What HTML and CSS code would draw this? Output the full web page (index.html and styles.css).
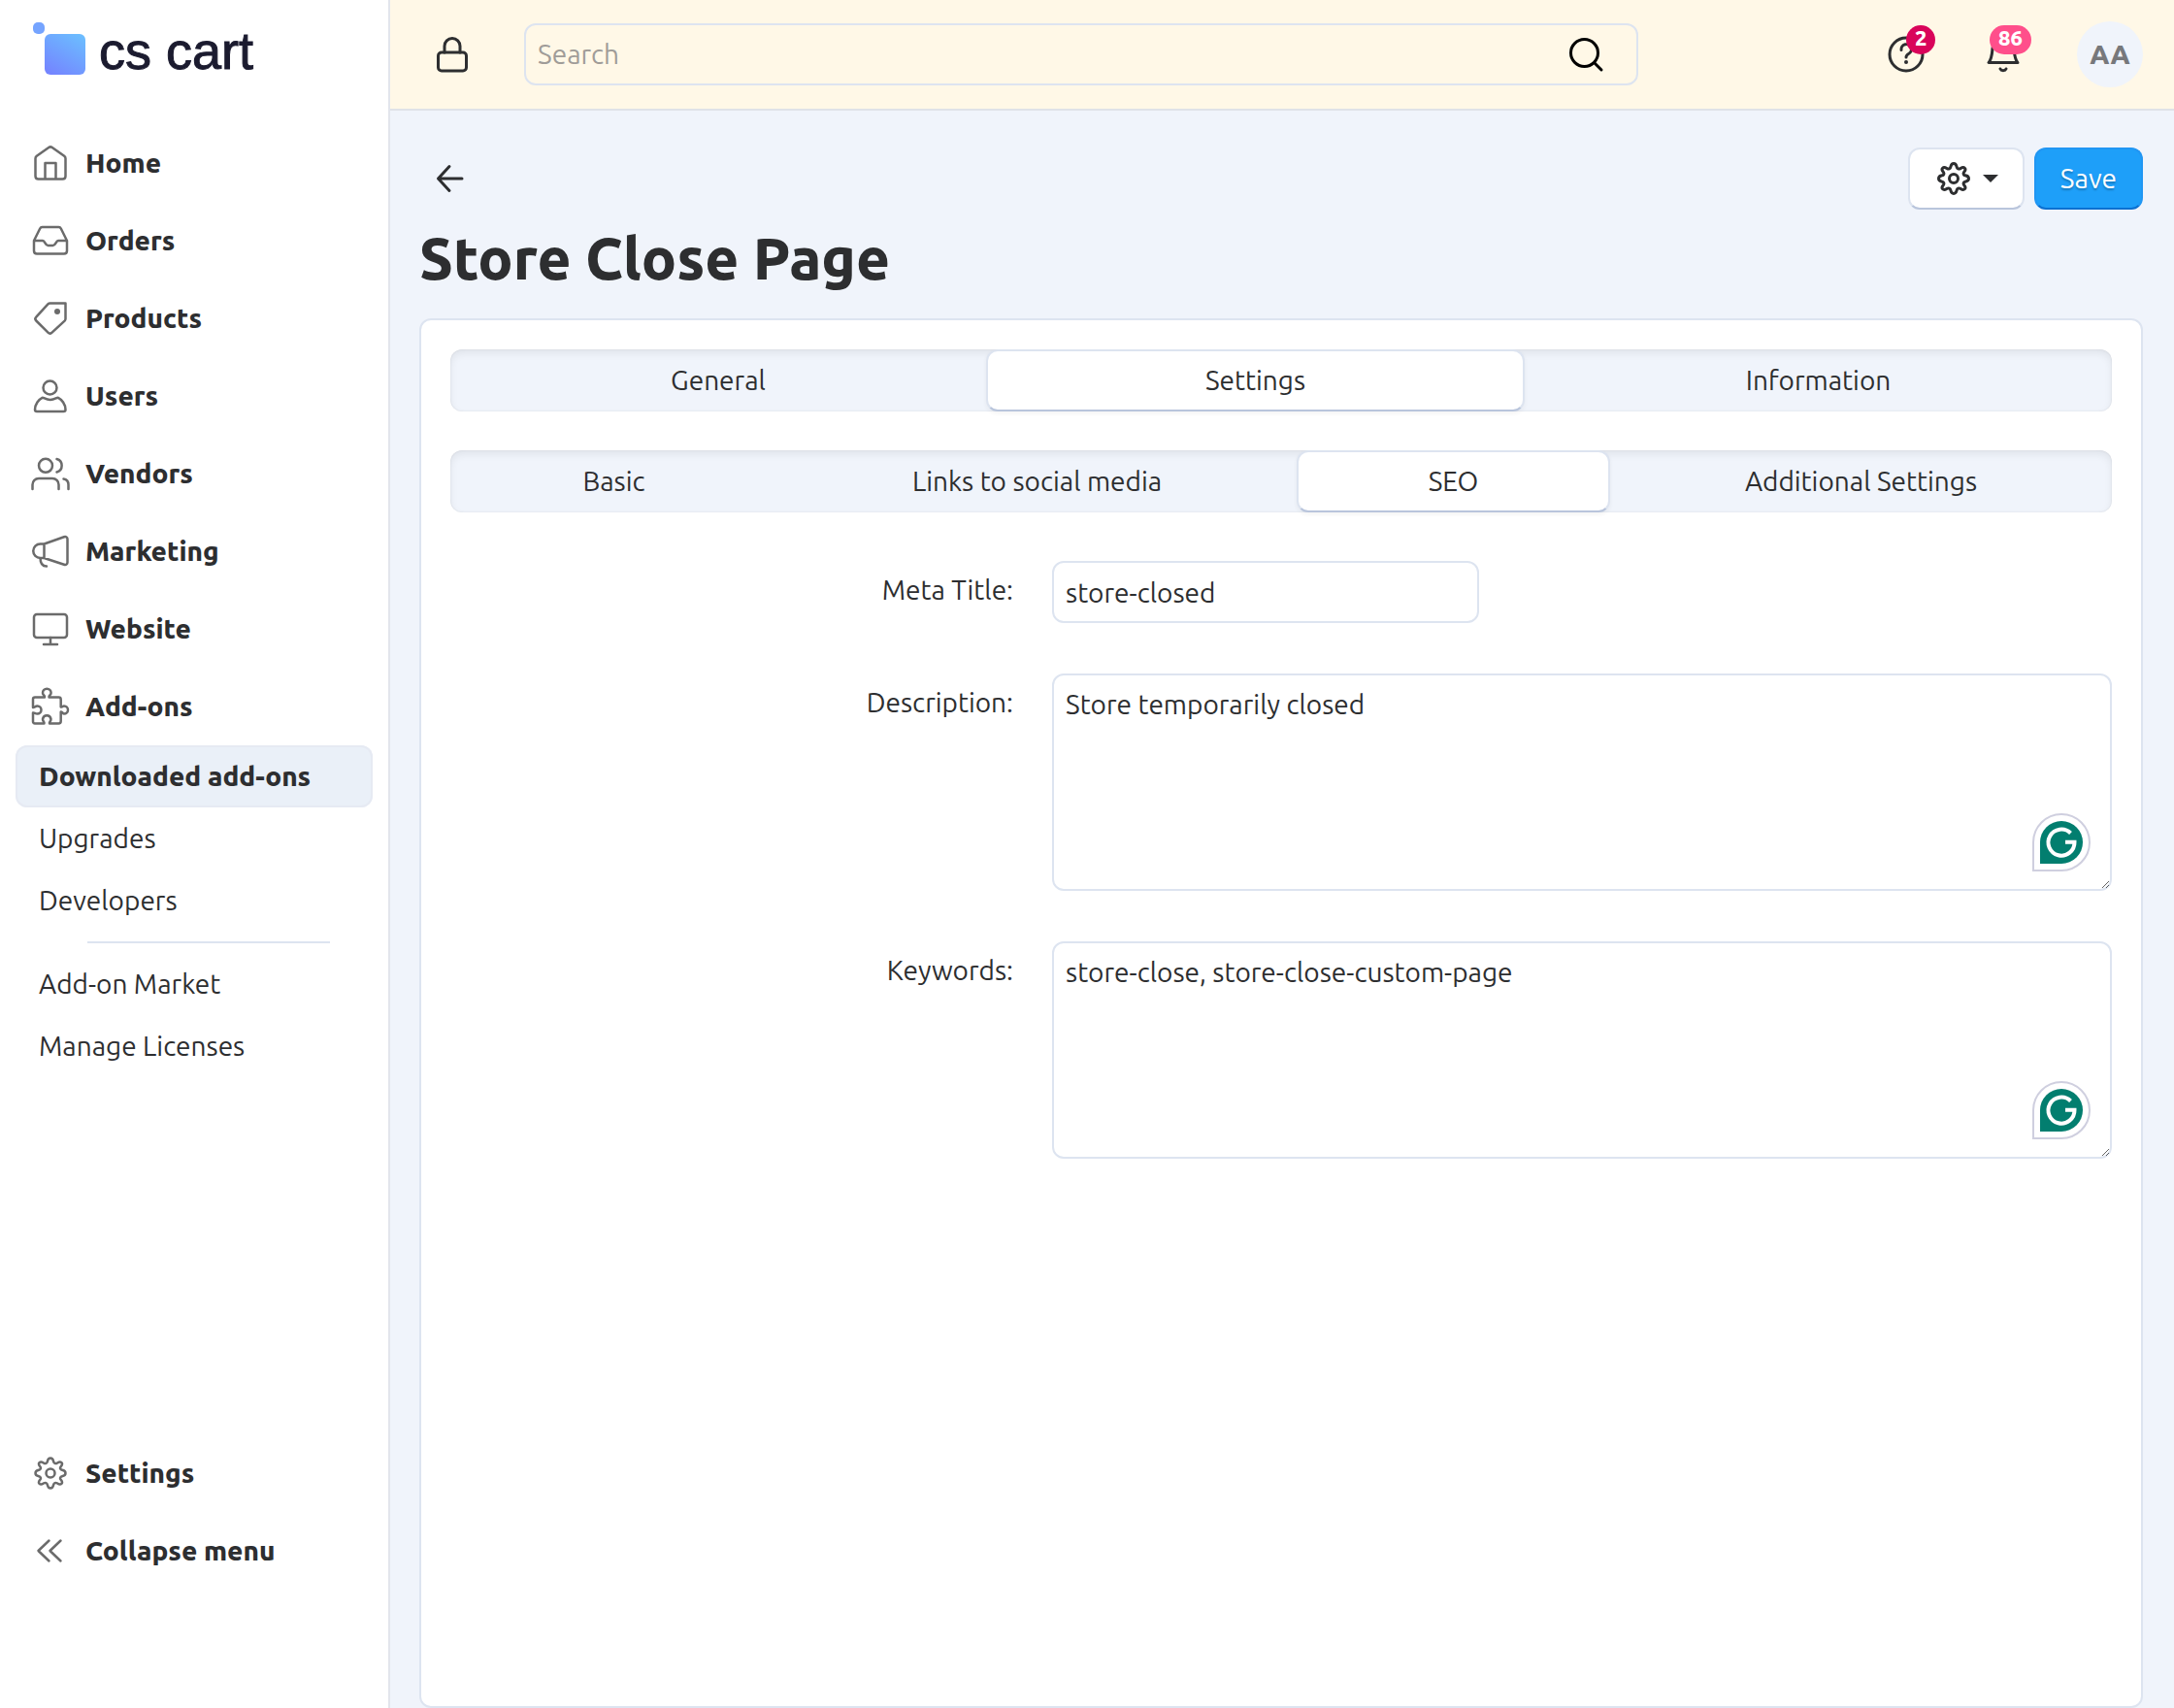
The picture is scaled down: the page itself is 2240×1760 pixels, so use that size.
FILE: index.html
```html
<!DOCTYPE html>
<html lang="en">
<head>
  <meta charset="UTF-8">
  <meta name="viewport" content="width=device-width, initial-scale=1.0">
  <title>Store Close Page</title>
  <link rel="stylesheet" href="styles.css">
</head>
<body>
  <svg class="sprite" aria-hidden="true">
    <symbol id="gear" viewBox="0 0 40 40">
      <path d="M20 4.5C22.6 4.5 22.8 6.600 23.200 8.200C23.600 9.900 25.300 10.600 26.800 9.700C28.200 8.800 29.800 7.600 31.400 9.200C33 10.800 31.600 12.200 30.500 13.500C29.500 14.900 30.300 16.500 31.900 16.800C33.600 17.100 35.500 17.600 35.500 20C35.500 22.400 33.600 22.900 31.900 23.200C30.300 23.500 29.500 25.100 30.500 26.500C31.600 27.800 33 29.200 31.400 30.800C29.800 32.400 28.200 31.200 26.800 30.300C25.300 29.400 23.600 30.100 23.200 31.800C22.800 33.400 22.600 35.500 20 35.500C17.400 35.500 17.200 33.400 16.800 31.800C16.400 30.100 14.700 29.400 13.200 30.300C11.800 31.200 10.200 32.400 8.600 30.800C7 29.200 8.400 27.800 9.500 26.500C10.500 25.100 9.700 23.500 8.100 23.200C6.400 22.900 4.500 22.400 4.500 20C4.500 17.600 6.400 17.100 8.100 16.800C9.700 16.500 10.500 14.900 9.500 13.500C8.400 12.200 7 10.800 8.600 9.200C10.200 7.600 11.800 8.800 13.200 9.700C14.700 10.600 16.400 9.900 16.800 8.200C17.200 6.600 17.400 4.500 20 4.500Z"/>
      <circle cx="20" cy="20" r="4.500"/>
    </symbol>
    <symbol id="grammar" viewBox="0 0 60 60">
      <path d="M30 1A29 29 0 0 1 30 59H1V30A29 29 0 0 1 30 1Z" fill="#fff" stroke="#cfcfdf" stroke-width="2"/>
      <path d="M30 8A22 22 0 0 1 30 52H8V30A22 22 0 0 1 30 8Z" fill="#027e6f"/>
      <path d="M39.500 20.500A13.500 13.500 0 1 0 43.500 29.800H34" fill="none" stroke="#fff" stroke-width="4"/>
    </symbol>
  </svg>

  <div class="layout">
    <aside class="sidebar">
      <a class="logo" href="#">
        <svg width="60" height="60" viewBox="0 0 60 60" aria-hidden="true">
          <defs>
            <linearGradient id="logo-fill" x1="0.2" y1="1" x2="0.8" y2="0">
              <stop offset="0" stop-color="#7485ff"/>
              <stop offset="1" stop-color="#6cbcff"/>
            </linearGradient>
          </defs>
          <rect x="2" y="1" width="12" height="12" rx="5" fill="#75a4ff"/>
          <rect x="14" y="13" width="42" height="42" rx="6" fill="url(#logo-fill)"/>
        </svg>
        <span>cs cart</span>
      </a>

      <nav class="menu">
        <a href="#"><svg class="icon" viewBox="0 0 40 40"><path d="M4.500 15.200C4.500 14.200 5 13.300 5.800 12.700L18.200 4C19.300 3.200 20.700 3.200 21.800 4L34.200 12.700C35 13.300 35.500 14.200 35.500 15.200V33.500C35.500 35.200 34.200 36.500 32.500 36.500H7.500C5.800 36.500 4.500 35.200 4.500 33.500ZM14.500 36V20H25.500V36"/></svg>Home</a>
        <a href="#"><svg class="icon" viewBox="0 0 40 40"><path d="M3 20L9.200 7.500C9.700 6.500 10.500 6 11.500 6H28.500C29.500 6 30.300 6.500 30.800 7.500L37 20V30.500C37 32.200 35.700 33.500 34 33.500H6C4.300 33.500 3 32.200 3 30.500ZM3 20H12C14.500 20 14.500 25 17.500 25H22.500C25.500 25 25.500 20 28 20H37"/></svg>Orders</a>
        <a href="#"><svg class="icon" viewBox="0 0 40 40"><path d="M19.500 4.500H35.500V20.500C35.500 21.300 35.200 22 34.600 22.600L21.300 34.800C20.200 35.800 18.600 35.800 17.500 34.700L5.300 22.500C4.200 21.400 4.200 19.700 5.300 18.600L17.400 5.400C18 4.800 18.700 4.500 19.500 4.500Z"/><circle class="solid" cx="27" cy="13" r="3"/></svg>Products</a>
        <a href="#"><svg class="icon" viewBox="0 0 40 40"><circle cx="19.500" cy="11.500" r="7"/><path d="M11.500 21.800C8 23.500 4 28.500 4 34C4 35.200 4.800 36 6 36H33.500C34.700 36 35.500 35.200 35.500 34C35.500 28.500 31.500 23.500 28 21.800C26.500 21.200 24.500 24 19.800 24C15 24 13 21.200 11.500 21.800Z"/></svg>Users</a>
        <a href="#"><svg class="icon" viewBox="0 0 40 40"><circle cx="15" cy="11.800" r="7"/><path d="M26.500 5A7 7 0 0 1 26.500 18.500M1.500 36V31.500C1.500 28 4.200 25 8 25H22C25.800 25 28.500 28 28.500 31.500V36M33.500 25.500C36.500 26 38.500 28.500 38.500 31.500V36"/></svg>Vendors</a>
        <a href="#"><svg class="icon" viewBox="0 0 40 40"><path d="M13.500 12.500L34 5.300C36 4.600 37.500 5.700 37.500 7.500V31.500C37.500 33.300 36 34.400 34 33.700L13.500 27H9.500A7.200 7.200 0 0 1 9.500 12.500ZM13.500 12.500V27M9.500 27C9.500 32 11.500 35.500 16 35.500"/></svg>Marketing</a>
        <a href="#"><svg class="icon" viewBox="0 0 40 40"><rect x="3" y="5" width="34" height="24" rx="3"/><path d="M20 29V36M13 36H27"/></svg>Website</a>
        <a href="#"><svg class="icon" viewBox="0 0 40 40"><path d="M4 10.500H14C14.500 8.500 12 8.500 12 6A4.300 4.300 0 0 1 20.600 6C20.600 8.500 18 8.500 18.500 10.500H28.500C30.200 10.500 30.700 11.500 30.700 12.700V20.500C32.500 21 32.500 19.500 34 19.500A4 4 0 0 1 34 27.500C32.500 27.500 32.500 25 30.700 25.500V35C30.700 36.500 30 37.500 28.500 37.500H19C18.500 35.500 20.500 35.500 20.500 33A4.300 4.300 0 0 0 12 33C12 35.500 14 35.500 13.500 37.500H4C2.700 37.500 2 36.700 2 35.500V26.500C3.500 26 4 27.500 6.500 27.500A4 4 0 0 0 6.500 19.500C4 19.500 3.500 21.500 2 21V12.500C2 11.200 2.700 10.500 4 10.500Z"/></svg>Add-ons</a>
      </nav>

      <nav class="submenu">
        <a class="active" href="#">Downloaded add-ons</a>
        <a href="#">Upgrades</a>
        <a href="#">Developers</a>
        <hr>
        <a href="#">Add-on Market</a>
        <a href="#">Manage Licenses</a>
      </nav>

      <nav class="menu menu-bottom">
        <a href="#"><svg class="icon"><use href="#gear"/></svg>Settings</a>
        <a href="#"><svg class="icon" viewBox="0 0 40 40"><path d="M18.500 9.500L7.500 20L18.500 30.500M30.500 9.500L19.500 20L30.500 30.500"/></svg>Collapse menu</a>
      </nav>
    </aside>

    <div class="page">
      <header class="topbar">
        <button class="icon-btn" type="button" aria-label="Store closed"><svg class="icon dark" viewBox="0 0 40 40"><rect x="5.500" y="18" width="29" height="19" rx="3.500"/><path d="M12 18V11.500A8 8 0 0 1 28 11.500V18"/></svg></button>
        <form class="search">
          <input type="search" placeholder="Search" aria-label="Search">
          <button class="icon-btn" type="button" aria-label="Find"><svg class="icon black" viewBox="0 0 40 40"><circle cx="18.500" cy="18.500" r="14"/><path d="M29 29L36 36"/></svg></button>
        </form>
        <div class="tools">
          <button class="icon-btn" type="button" aria-label="Help">
            <svg class="icon dark" viewBox="0 0 40 40"><circle cx="20" cy="20" r="17"/><path d="M15 15.500A5.200 5.200 0 1 1 22.500 19.500C20.800 20.500 20 21.300 20 23"/><circle class="solid" cx="20" cy="28" r="2"/></svg>
            <span class="badge badge-help">2</span>
          </button>
          <button class="icon-btn" type="button" aria-label="Notifications">
            <svg class="icon dark" viewBox="0 0 40 40"><path d="M5 28.500H35C32 25.500 31.500 20 31 14.500A11 11 0 0 0 9 14.500C8.500 20 8 25.500 5 28.500ZM17 35C18 37.300 22 37.300 23 35"/></svg>
            <span class="badge badge-bell">86</span>
          </button>
          <button class="avatar" type="button">AA</button>
        </div>
      </header>

      <main class="content">
        <div class="actions">
          <a class="back" href="#" aria-label="Back"><svg class="icon dark" viewBox="0 0 40 40"><path d="M32 20H8M19 7.500L7.500 20L19 32.500"/></svg></a>
          <button class="btn" type="button" aria-label="Tools"><svg class="icon dark"><use href="#gear"/></svg><span class="caret"></span></button>
          <button class="btn btn-primary" type="submit" form="addon-form">Save</button>
        </div>
        <h1>Store Close Page</h1>

        <section class="card">
          <div class="tabs tabs-main">
            <button type="button">General</button>
            <button class="active" type="button">Settings</button>
            <button type="button">Information</button>
          </div>
          <div class="tabs tabs-sub">
            <button type="button">Basic</button>
            <button type="button">Links to social media</button>
            <button class="active" type="button">SEO</button>
            <button type="button">Additional Settings</button>
          </div>

          <form class="fields" id="addon-form">
            <label for="meta-title">Meta Title:</label>
            <div class="control"><input id="meta-title" type="text" value="store-closed"></div>
            <label for="description">Description:</label>
            <div class="control">
              <textarea id="description">Store temporarily closed</textarea>
              <svg class="grammar"><use href="#grammar"/></svg>
            </div>
            <label for="keywords">Keywords:</label>
            <div class="control">
              <textarea id="keywords">store-close, store-close-custom-page</textarea>
              <svg class="grammar"><use href="#grammar"/></svg>
            </div>
          </form>
        </section>
      </main>
    </div>
  </div>
</body>
</html>
```

FILE: styles.css
```css
* {
  box-sizing: border-box;
}

body {
  margin: 0;
  font-family: Ubuntu, "Noto Sans", sans-serif;
  font-size: 28px;
  font-weight: 450;
  line-height: 40px;
  color: #2d2e30;
  background-color: #f0f4fb;
}

button,
input,
textarea {
  font: inherit;
  color: inherit;
}

button {
  cursor: pointer;
}

a {
  color: inherit;
  text-decoration: none;
}

.sprite {
  display: none;
}

.layout {
  display: flex;
  min-height: 100vh;
}

.icon {
  width: 40px;
  height: 40px;
  flex-shrink: 0;
  fill: none;
  stroke: #6b6b6b;
  stroke-width: 2.5;
  stroke-linecap: round;
  stroke-linejoin: round;
}

.icon.dark {
  stroke: #2d2e30;
  stroke-width: 3;
}

.icon.black {
  stroke: #000000;
  stroke-width: 3;
}

.icon .solid {
  fill: #6b6b6b;
  stroke: none;
}

.icon.dark .solid {
  fill: #2d2e30;
}

/* Sidebar */
.sidebar {
  display: flex;
  flex-direction: column;
  width: 402px;
  flex-shrink: 0;
  background-color: #ffffff;
  border-right: 2px solid #e2e5ec;
}

.logo {
  display: flex;
  gap: 10px;
  padding: 22px 32px 0;
  margin-bottom: 46px;
  font-family: "Liberation Sans", Arial, sans-serif;
  font-size: 54px;
  font-weight: normal;
  line-height: 60px;
  color: #1b1b2f;
  -webkit-text-stroke: 1px #1b1b2f;
}

.menu a {
  display: flex;
  align-items: center;
  gap: 16px;
  height: 80px;
  padding: 0 32px;
  font-weight: 800;
}

.submenu {
  padding: 0 16px;
}

.submenu a {
  display: block;
  padding: 12px 24px;
}

.submenu a.active {
  font-weight: 800;
  background-color: #eaf0f8;
  box-shadow: inset 0 0 0 2px #e6eaf3;
  border-radius: 12px;
}

.submenu hr {
  margin: 10px 44px 10px 74px;
  border: 0;
  border-top: 2px solid #dde4f0;
}

.menu-bottom {
  margin-top: auto;
  padding-bottom: 122px;
}

/* Top bar */
.page {
  display: flex;
  flex-direction: column;
  flex: 1;
  min-width: 0;
}

.topbar {
  display: flex;
  align-items: center;
  height: 114px;
  padding: 0 32px 0 44px;
  background-color: #fff8e7;
  border-bottom: 2px solid #dfe2e8;
}

.icon-btn {
  position: relative;
  display: flex;
  padding: 0;
  border: 0;
  background: none;
}

.search {
  display: flex;
  align-items: center;
  flex: 0 1 1148px;
  height: 64px;
  margin-left: 54px;
  padding-right: 32px;
  border: 2px solid #dde4f0;
  border-radius: 12px;
}

.search input {
  flex: 1;
  min-width: 0;
  padding: 0 12px;
  border: 0;
  outline: none;
  background: none;
}

.search input::placeholder {
  color: #9f9c98;
}

.tools {
  display: flex;
  align-items: center;
  margin-left: auto;
  gap: 60px;
}

.badge {
  position: absolute;
  top: -10px;
  min-width: 30px;
  height: 30px;
  padding: 0 9px;
  border-radius: 15px;
  font-size: 22px;
  font-weight: 800;
  line-height: 26px;
  color: #ffffff;
}

.badge-help {
  left: 20px;
  background-color: #d9045a;
}

.badge-bell {
  left: 6px;
  background-color: #ff4f8b;
}

.avatar {
  width: 68px;
  height: 68px;
  margin-left: -4px;
  padding: 0;
  border: 0;
  border-radius: 50%;
  font-weight: 800;
  color: #77787b;
  background-color: #f0f4fb;
}

/* Content */
.content {
  display: flex;
  flex-direction: column;
  flex: 1;
  padding: 38px 32px 0 30px;
}

.actions {
  display: flex;
  align-items: center;
  gap: 10px;
}

.back {
  display: flex;
  margin-right: auto;
  padding: 0 12px;
}

.btn {
  display: flex;
  align-items: center;
  gap: 10px;
  height: 64px;
  padding: 0 25px;
  border: 2px solid #dde4f0;
  border-bottom-color: #b9c5dc;
  border-radius: 12px;
  background-color: #ffffff;
}

.btn-primary {
  border-color: #2196f3;
  border-bottom-color: #0b70d1;
  color: #ffffff;
  background-color: #1e9ff9;
  text-shadow: 0 2px 2px rgba(0, 0, 0, 0.25);
}

.caret {
  border: 8px solid transparent;
  border-top-color: #2d2e30;
  border-bottom: 0;
}

h1 {
  margin: 10px 0 22px;
  font-size: 60px;
  font-weight: 800;
  line-height: 80px;
}

.card {
  flex: 1;
  padding: 30px;
  border: 2px solid #dde4f0;
  border-radius: 12px;
  background-color: #ffffff;
}

.tabs {
  display: grid;
  margin-bottom: 40px;
  border-radius: 12px;
  background-color: #f0f4fb;
  box-shadow: inset 0 4px 8px rgba(0, 0, 0, 0.07), inset 0 0 2px rgba(0, 0, 0, 0.1);
}

.tabs-main {
  grid-template-columns: 552fr 555fr 605fr;
}

.tabs-sub {
  grid-template-columns: 337fr 535fr 323fr 517fr;
}

.tabs button {
  height: 64px;
  padding: 0;
  border: 2px solid transparent;
  border-radius: 12px;
  background: none;
}

.tabs button.active {
  border-color: #dde4f0;
  border-bottom-color: #b9c5dc;
  background-color: #ffffff;
  box-shadow: 0 2px 4px rgba(45, 46, 48, 0.06);
}

.fields {
  display: grid;
  grid-template-columns: 580px 1fr;
  column-gap: 40px;
  row-gap: 52px;
  padding-top: 10px;
}

.fields label {
  padding-top: 10px;
  text-align: right;
}

.control {
  position: relative;
}

.control input,
.control textarea {
  display: block;
  padding: 10px 12px;
  border: 2px solid #dde4f0;
  border-radius: 12px;
  outline: none;
  background-color: #ffffff;
}

.control input {
  width: 440px;
  height: 64px;
}

.control textarea {
  width: 100%;
  height: 224px;
}

.grammar {
  position: absolute;
  right: 22px;
  bottom: 20px;
  width: 60px;
  height: 60px;
}
```
